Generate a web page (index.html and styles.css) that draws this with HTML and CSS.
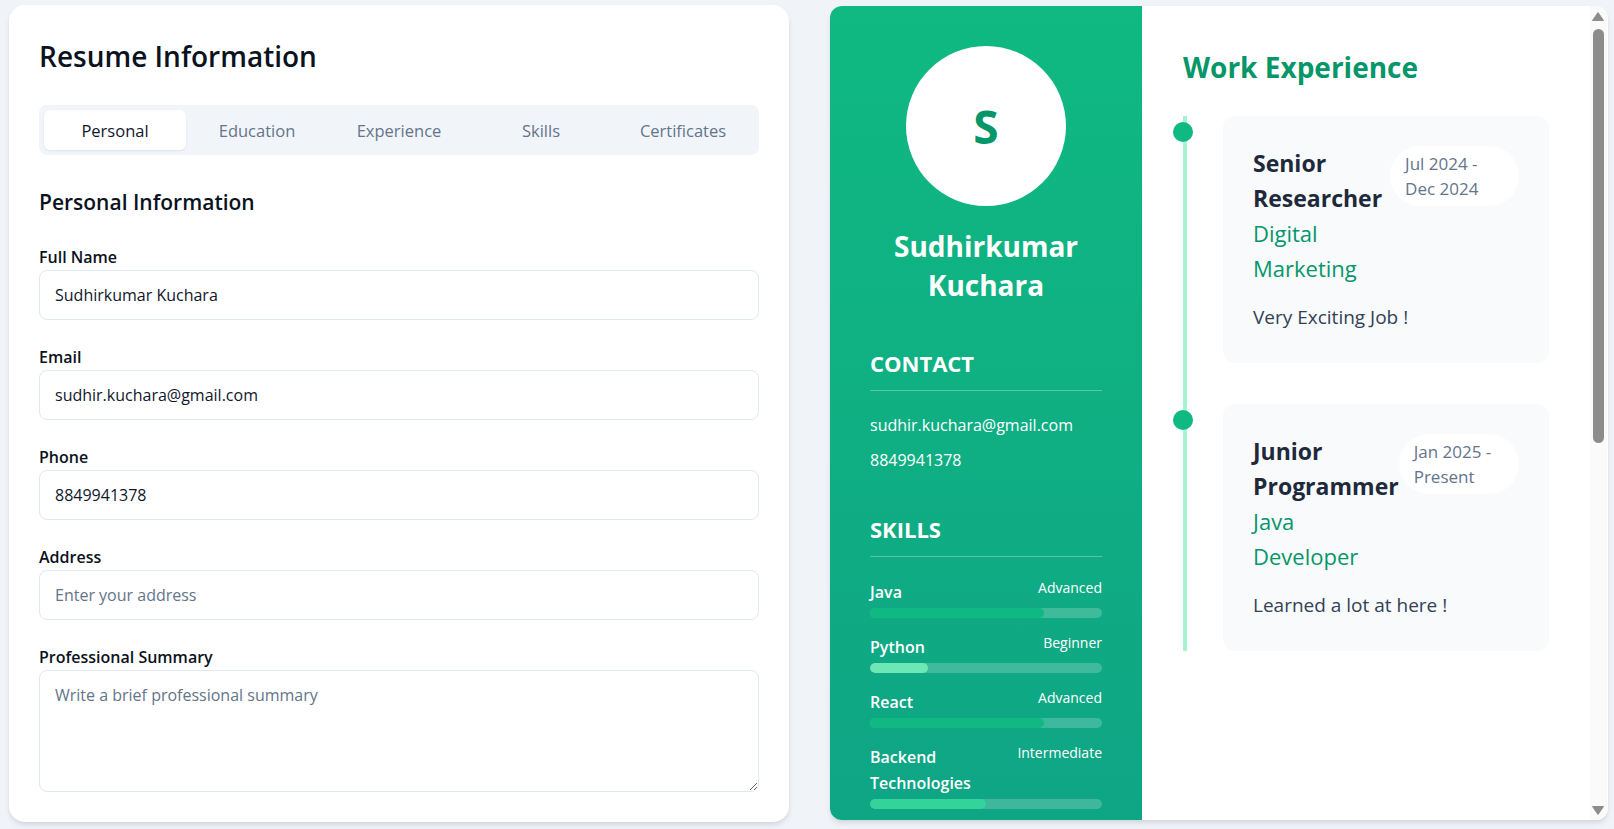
FILE: index.html
```html
<!DOCTYPE html>
<html lang="en">
<head>
<meta charset="utf-8">
<title>Resume Builder</title>
<link rel="stylesheet" href="styles.css">
</head>
<body>
<div class="page">
  <section class="editor">
    <h1 class="editor-title">Resume Information</h1>
    <nav class="tabs">
      <button class="tab active">Personal</button>
      <button class="tab">Education</button>
      <button class="tab">Experience</button>
      <button class="tab">Skills</button>
      <button class="tab">Certificates</button>
    </nav>
    <h2 class="section-title">Personal Information</h2>
    <div class="field">
      <label class="label">Full Name</label>
      <input class="input" type="text" value="Sudhirkumar Kuchara">
    </div>
    <div class="field">
      <label class="label">Email</label>
      <input class="input" type="text" value="sudhir.kuchara@gmail.com">
    </div>
    <div class="field">
      <label class="label">Phone</label>
      <input class="input" type="text" value="8849941378">
    </div>
    <div class="field">
      <label class="label">Address</label>
      <input class="input" type="text" placeholder="Enter your address">
    </div>
    <div class="field last">
      <label class="label">Professional Summary</label>
      <textarea class="textarea" placeholder="Write a brief professional summary"></textarea>
    </div>
  </section>

  <section class="preview">
    <div class="resume">
      <aside class="sidebar">
        <div class="avatar">S</div>
        <div class="name">Sudhirkumar Kuchara</div>

        <div class="side-section">
          <h3 class="side-title">Contact</h3>
          <p class="contact">sudhir.kuchara@gmail.com</p>
          <p class="contact">8849941378</p>
        </div>

        <div class="side-section">
          <h3 class="side-title">Skills</h3>
          <div class="skill">
            <div class="skill-row"><span class="skill-name">Java</span><span class="skill-level">Advanced</span></div>
            <div class="bar"><div class="fill fill-adv" style="width:75%"></div></div>
          </div>
          <div class="skill">
            <div class="skill-row"><span class="skill-name">Python</span><span class="skill-level">Beginner</span></div>
            <div class="bar"><div class="fill fill-beg" style="width:25%"></div></div>
          </div>
          <div class="skill">
            <div class="skill-row"><span class="skill-name">React</span><span class="skill-level">Advanced</span></div>
            <div class="bar"><div class="fill fill-adv" style="width:75%"></div></div>
          </div>
          <div class="skill">
            <div class="skill-row"><span class="skill-name">Backend Technologies</span><span class="skill-level">Intermediate</span></div>
            <div class="bar"><div class="fill fill-int" style="width:50%"></div></div>
          </div>
        </div>
      </aside>

      <main class="main">
        <h2 class="main-title">Work Experience</h2>
        <div class="timeline">
          <div class="t-item">
            <span class="dot"></span>
            <div class="job">
              <div class="job-top">
                <div class="job-head">
                  <h3 class="job-title">Senior Researcher</h3>
                  <div class="company">Digital Marketing</div>
                </div>
                <span class="date">Jul 2024 - Dec 2024</span>
              </div>
              <p class="desc">Very Exciting Job !</p>
            </div>
          </div>
          <div class="t-item">
            <span class="dot"></span>
            <div class="job">
              <div class="job-top">
                <div class="job-head">
                  <h3 class="job-title">Junior Programmer</h3>
                  <div class="company">Java Developer</div>
                </div>
                <span class="date">Jan 2025 - Present</span>
              </div>
              <p class="desc">Learned a lot at here !</p>
            </div>
          </div>
        </div>
      </main>
    </div>

    <div class="scrollbar" aria-hidden="true">
      <svg class="arrow arrow-up" width="12" height="9" viewBox="0 0 12 9"><path d="M6 0.5 L11.5 8.5 L0.5 8.5 Z" fill="#8c8c8c" stroke="#8c8c8c" stroke-linejoin="round"/></svg>
      <div class="thumb"></div>
      <svg class="arrow arrow-down" width="12" height="9" viewBox="0 0 12 9"><path d="M0.5 0.5 L11.5 0.5 L6 8.5 Z" fill="#8c8c8c" stroke="#8c8c8c" stroke-linejoin="round"/></svg>
    </div>
  </section>
</div>
</body>
</html>
```

FILE: styles.css
```css
* { box-sizing: border-box; }

html, body {
  margin: 0;
  padding: 0;
  height: 100%;
  overflow: hidden;
}

body {
  background: #f0f4f9;
  font-family: "Open Sans", "Noto Sans", sans-serif;
  color: #0f172a;
}

.page {
  display: grid;
  grid-template-columns: 780px 778px;
  column-gap: 41px;
  padding: 5px 6px 0 9px;
  align-items: start;
}

/* ---------- Editor card ---------- */
.editor {
  height: 817px;
  background: #fff;
  border-radius: 16px;
  padding: 30px;
  box-shadow: 0 4px 6px -1px rgba(15, 23, 42, 0.1), 0 2px 4px -1px rgba(15, 23, 42, 0.06);
}

.editor-title {
  margin: 0 0 28px;
  font-size: 28px;
  line-height: 42px;
  font-weight: 600;
  color: #0b1220;
}

.tabs {
  display: grid;
  grid-template-columns: repeat(5, 1fr);
  height: 50px;
  padding: 5px;
  background: #f1f5f9;
  border-radius: 8px;
  margin-bottom: 32px;
}

.tab {
  border: 0;
  background: transparent;
  font-family: inherit;
  font-size: 16.5px;
  font-weight: 500;
  color: #64748b;
  border-radius: 6px;
  padding: 0;
  cursor: pointer;
}

.tab.active {
  background: #fff;
  color: #0f172a;
  box-shadow: 0 1px 2px rgba(15, 23, 42, 0.08);
}

.section-title {
  margin: 0 0 28px;
  font-size: 21px;
  line-height: 30px;
  font-weight: 600;
  color: #0b1220;
}

.field { margin-bottom: 25px; }
.field.last { margin-bottom: 0; }

.label {
  display: block;
  font-size: 16px;
  line-height: 24px;
  font-weight: 600;
  margin-bottom: 1px;
  color: #0b1220;
}

.input,
.textarea {
  display: block;
  width: 100%;
  border: 1px solid #e2e8f0;
  border-radius: 8px;
  font-family: inherit;
  font-size: 16px;
  color: #0f172a;
  background: #fff;
  outline: none;
}

.input {
  height: 50px;
  padding: 0 15px;
}

.textarea {
  height: 122px;
  padding: 12px 15px;
  line-height: 24px;
  resize: vertical;
}

.input::placeholder,
.textarea::placeholder { color: #64748b; opacity: 1; }

/* ---------- Preview ---------- */
.preview {
  position: relative;
  height: 814px;
  margin-top: 1px;
  background: #fff;
  border-radius: 12px;
  overflow: hidden;
  box-shadow: 0 4px 6px -1px rgba(15, 23, 42, 0.1), 0 2px 4px -1px rgba(15, 23, 42, 0.06);
}

.scrollbar {
  position: absolute;
  top: 0;
  right: 1px;
  bottom: 0;
  width: 17px;
  background: #fafafa;
}

.arrow { position: absolute; left: 2px; }
.arrow-up { top: 6px; }
.arrow-down { bottom: 5px; }

.thumb {
  position: absolute;
  left: 3px;
  top: 23px;
  width: 11px;
  height: 414px;
  border-radius: 6px;
  background: #8c8c8c;
}

.resume {
  display: flex;
  min-height: 1512px;
}

.sidebar {
  width: 312px;
  flex: none;
  padding: 40px;
  color: #fff;
  background: linear-gradient(180deg, #10b981 0%, #0d9488 100%);
}

.avatar {
  width: 160px;
  height: 160px;
  margin: 0 auto 21px;
  border-radius: 50%;
  background: #fff;
  color: #059669;
  font-size: 46px;
  font-weight: 700;
  display: flex;
  align-items: center;
  justify-content: center;
}

.name {
  text-align: center;
  font-size: 28px;
  line-height: 39px;
  font-weight: 700;
  margin-bottom: 43px;
}

.side-section { margin-bottom: 41px; }

.side-title {
  margin: 0 0 22px;
  font-size: 22px;
  line-height: 30px;
  font-weight: 700;
  text-transform: uppercase;
  padding-bottom: 12px;
  border-bottom: 1px solid rgba(255, 255, 255, 0.3);
}

.contact {
  margin: 0 0 10px;
  font-size: 16px;
  line-height: 25px;
}

.skill { margin-bottom: 16px; }

.skill-row {
  display: flex;
  justify-content: space-between;
  align-items: flex-start;
  gap: 8px;
  margin-bottom: 3px;
}

.skill-name {
  font-size: 16px;
  line-height: 26px;
  font-weight: 600;
}

.skill-level {
  font-size: 14px;
  line-height: 18px;
  white-space: nowrap;
}

.bar {
  height: 10px;
  border-radius: 5px;
  background: rgba(255, 255, 255, 0.2);
  overflow: hidden;
}

.fill { height: 100%; border-radius: 5px; }
.fill-adv { background: #10b981; }
.fill-beg { background: #6ee7b7; }
.fill-int { background: #34d399; }

.main {
  flex: 1;
  padding: 40px 59px 40px 41px;
}

.main-title {
  margin: 0 0 28px;
  font-size: 28px;
  line-height: 42px;
  font-weight: 700;
  color: #059669;
}

.timeline {
  border-left: 4px solid #a7f3d0;
}

.t-item {
  position: relative;
  padding-left: 36px;
  margin-bottom: 41px;
}
.t-item:last-child { margin-bottom: 0; }

.dot {
  position: absolute;
  left: -14px;
  top: 6px;
  width: 20px;
  height: 20px;
  border-radius: 50%;
  background: #10b981;
}

.job {
  background: #f8fafc;
  border-radius: 12px;
  padding: 30px;
}

.job-top {
  display: flex;
  justify-content: space-between;
  align-items: flex-start;
}

.job-title {
  margin: 0;
  font-size: 23px;
  line-height: 35px;
  font-weight: 700;
  color: #1e293b;
}

.company {
  font-size: 22px;
  line-height: 35px;
  font-weight: 500;
  color: #059669;
}

.date {
  background: #fff;
  border-radius: 30px;
  padding: 5px 15px;
  font-size: 17px;
  line-height: 25px;
  color: #64748b;
}

.desc {
  margin: 15px 0 0;
  font-size: 19px;
  line-height: 32px;
  color: #334155;
}
```
